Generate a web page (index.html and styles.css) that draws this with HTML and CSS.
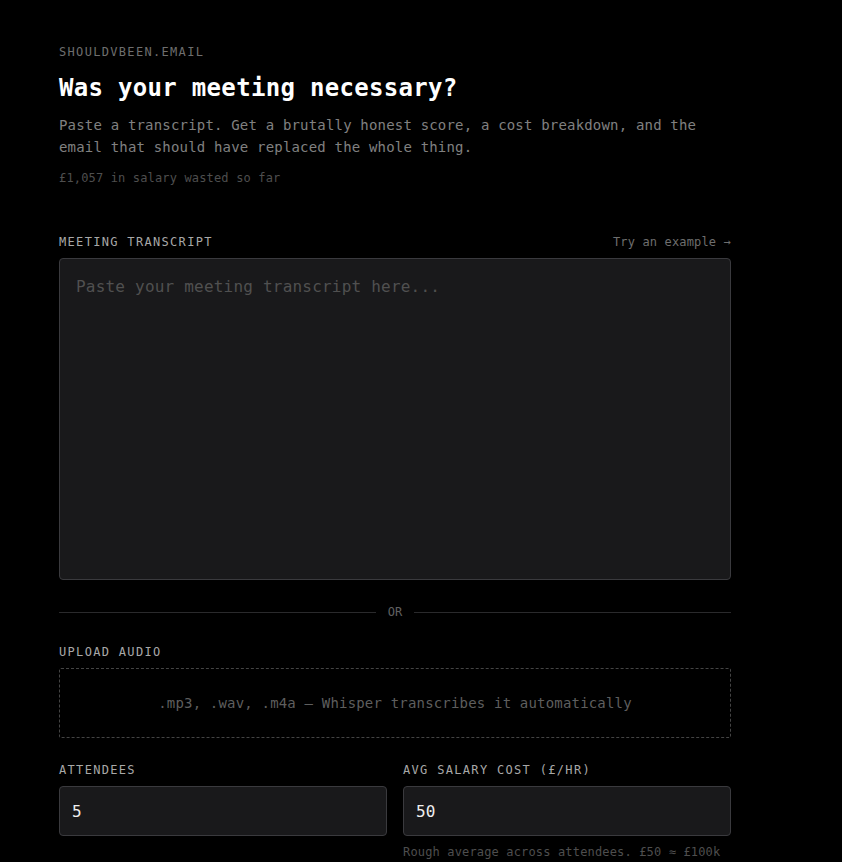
FILE: index.html
```html
<!DOCTYPE html>
<html lang="en">
<head>
    <meta charset="UTF-8">
    <meta name="viewport" content="width=device-width, initial-scale=1.0">
    <title>shouldvbeen.email</title>
    <link rel="stylesheet" href="styles.css">
</head>
<body>
    <main class="page">
        <header class="intro">
            <div class="brand">SHOULDVBEEN.EMAIL</div>
            <h1 class="title">Was your meeting necessary?</h1>
            <p class="lede">Paste a transcript. Get a brutally honest score, a cost breakdown, and the email that should have replaced the whole thing.</p>
            <p class="counter">£1,057 in salary wasted so far</p>
        </header>

        <section class="field">
            <div class="field-head">
                <label class="label" for="transcript">MEETING TRANSCRIPT</label>
                <a class="example" href="#">Try an example →</a>
            </div>
            <textarea id="transcript" class="transcript" placeholder="Paste your meeting transcript here..."></textarea>
        </section>

        <div class="divider"><span>OR</span></div>

        <section class="field">
            <div class="label">UPLOAD AUDIO</div>
            <div class="dropzone">.mp3, .wav, .m4a — Whisper transcribes it automatically</div>
        </section>

        <section class="row">
            <div class="field">
                <label class="label" for="attendees">ATTENDEES</label>
                <input id="attendees" class="input" type="text" value="5">
            </div>
            <div class="field">
                <label class="label" for="salary">AVG SALARY COST (£/HR)</label>
                <input id="salary" class="input" type="text" value="50">
                <p class="hint">Rough average across attendees. £50 ≈ £100k</p>
            </div>
        </section>
    </main>
</body>
</html>
```

FILE: styles.css
```css
* {
    margin: 0;
    padding: 0;
    box-sizing: border-box;
    font-family: "DejaVu Sans Mono", "Liberation Mono", monospace;
    letter-spacing: 0.013em;
}

body {
    background: #000;
    color: #eee;
}

.page {
    width: 672px;
    margin-left: 59px;
    padding-top: 44px;
}

/* Intro */
.brand {
    font-size: 12px;
    line-height: 16px;
    letter-spacing: 0.11em;
    color: #6e6e6e;
}

.title {
    margin-top: 12px;
    font-size: 24px;
    line-height: 32px;
    font-weight: bold;
    color: #fff;
}

.lede {
    margin-top: 10px;
    font-size: 14px;
    line-height: 22px;
    color: #808080;
}

.counter {
    margin-top: 12px;
    font-size: 12px;
    line-height: 16px;
    color: #4e4e4e;
}

/* Fields */
.intro + .field {
    margin-top: 48px;
}

.field-head {
    display: flex;
    justify-content: space-between;
    align-items: center;
}

.label {
    display: block;
    font-size: 12px;
    line-height: 16px;
    letter-spacing: 0.11em;
    color: #a8a8a8;
}

.example {
    font-size: 12px;
    line-height: 16px;
    color: #6e6e6e;
    text-decoration: none;
}

.transcript {
    display: block;
    width: 100%;
    height: 322px;
    margin-top: 8px;
    padding: 16px;
    background: #19191b;
    border: 1px solid #3a3a3e;
    border-radius: 4px;
    color: #eee;
    font-size: 16px;
    line-height: 24px;
    resize: none;
    outline: none;
}

.transcript::placeholder {
    color: #505050;
}

.divider {
    display: flex;
    align-items: center;
    gap: 12px;
    margin: 24px 0;
    font-size: 12px;
    line-height: 16px;
    letter-spacing: 0.11em;
    color: #606060;
}

.divider::before,
.divider::after {
    content: "";
    flex: 1;
    height: 1px;
    background: #2a2a2c;
}

.dropzone {
    display: flex;
    align-items: center;
    justify-content: center;
    height: 70px;
    margin-top: 8px;
    border: 1px dashed #444;
    border-radius: 2px;
    font-size: 14px;
    color: #5e5e5e;
}

.row {
    display: grid;
    grid-template-columns: 1fr 1fr;
    gap: 16px;
    margin-top: 24px;
}

.input {
    display: block;
    width: 100%;
    height: 50px;
    margin-top: 8px;
    padding: 0 12px;
    background: #19191b;
    border: 1px solid #3a3a3e;
    border-radius: 4px;
    color: #eee;
    font-size: 16px;
    outline: none;
}

.hint {
    margin-top: 8px;
    font-size: 12px;
    line-height: 16px;
    color: #4e4e4e;
}
```
